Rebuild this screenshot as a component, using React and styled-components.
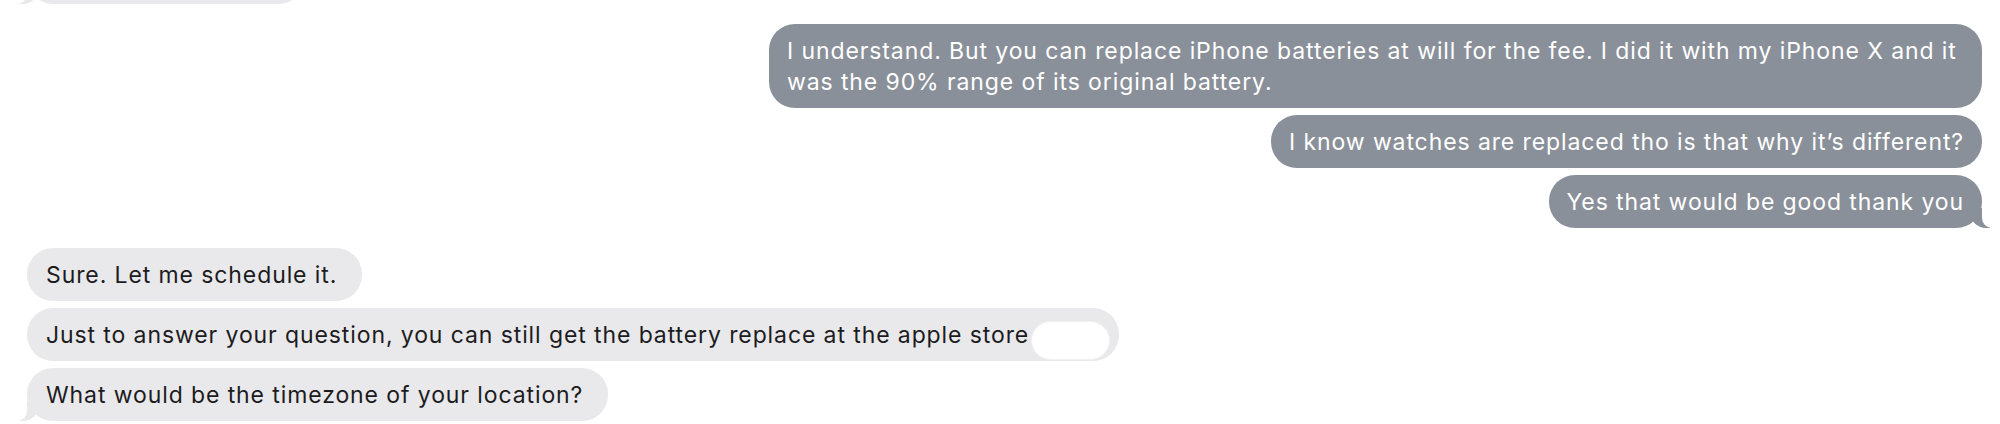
import React from "react";
import styled, { createGlobalStyle, css } from "styled-components";

const GlobalStyle = createGlobalStyle`
  html, body {
    margin: 0;
    padding: 0;
    background: #ffffff;
  }
  body {
    font-family: Inter, "Noto Sans", "Liberation Sans", sans-serif;
    -webkit-font-smoothing: antialiased;
  }
`;

const Chat = styled.div`
  height: 424px;
  overflow: hidden;
  display: flex;
  flex-direction: column;
  justify-content: flex-end;
  padding: 0 18px 3px 27px;
  box-sizing: border-box;
`;

const Group = styled.div`
  display: flex;
  flex-direction: column;
  align-items: ${(p) => (p.$sent ? "flex-end" : "flex-start")};
  gap: 7px;
  margin-top: 20px;

  &:first-child {
    margin-top: 0;
  }
`;

const tail = css`
  &::before,
  &::after {
    content: "";
    position: absolute;
    bottom: 0;
    height: 20px;
  }
  &::before {
    width: 20px;
    background: ${(p) => (p.$sent ? "#8a9099" : "#e9e9eb")};
    ${(p) =>
      p.$sent
        ? "right: -8px; border-bottom-left-radius: 16px;"
        : "left: -8px; border-bottom-right-radius: 16px;"}
  }
  &::after {
    width: 10px;
    background: #ffffff;
    ${(p) =>
      p.$sent
        ? "right: -10px; border-bottom-left-radius: 10px;"
        : "left: -10px; border-bottom-right-radius: 10px;"}
  }
`;

const Bubble = styled.div`
  position: relative;
  box-sizing: border-box;
  flex-shrink: 0;
  max-width: 1213px;
  min-height: 53px;
  width: ${(p) => (p.$w ? `${p.$w}px` : "fit-content")};
  padding: 12px ${(p) => (p.$sent ? "18px" : p.$trail ? "10px" : "25px")} 10px
    ${(p) => (p.$sent ? "18px" : "19px")};
  border-radius: 26px;
  background: ${(p) => (p.$sent ? "#8a9099" : "#e9e9eb")};
  color: ${(p) => (p.$sent ? "#ffffff" : "#1c1c1e")};
  font-size: 23px;
  line-height: 31px;
  letter-spacing: 0.9px;
  ${(p) => p.$last && tail}
`;

const Blank = styled.span`
  display: inline-block;
  width: 77px;
  height: 37px;
  margin: -12px 0 -12px 3px;
  border-radius: 19px;
  background: #ffffff;
  box-shadow: 0 0 0 1px #f1f1f3;
  vertical-align: -4px;
`;

export default function App() {
  return (
    <>
      <GlobalStyle />
      <Chat>
        <Group>
          <Bubble $w={278} $last />
        </Group>
        <Group $sent>
          <Bubble $sent>
            I understand. But you can replace iPhone batteries at will for the fee. I did it with my
            iPhone X and it was the 90% range of its original battery.
          </Bubble>
          <Bubble $sent>I know watches are replaced tho is that why it’s different?</Bubble>
          <Bubble $sent $last>
            Yes that would be good thank you
          </Bubble>
        </Group>
        <Group>
          <Bubble>Sure. Let me schedule it.</Bubble>
          <Bubble $trail>
            Just to answer your question, you can still get the battery replace at the apple store
            <Blank />
          </Bubble>
          <Bubble $last>What would be the timezone of your location?</Bubble>
        </Group>
      </Chat>
    </>
  );
}
